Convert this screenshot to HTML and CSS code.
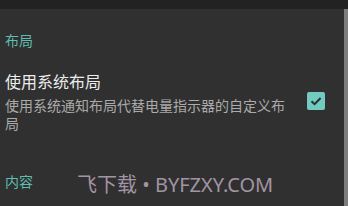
FILE: index.html
```html
<!DOCTYPE html>
<html lang="zh">
<head>
<meta charset="utf-8">
<link rel="stylesheet" href="styles.css">
</head>
<body>
<div class="topbar"></div>
<div class="main">
  <div class="list">
    <div class="category first">布局</div>
    <div class="pref">
      <div class="pref-text">
        <div class="pref-title">使用系统布局</div>
        <div class="pref-summary">使用系统通知布局代替电量指示器的自定义布局</div>
      </div>
      <div class="pref-widget">
        <span class="checkbox">
          <svg viewBox="0 0 18 18" width="18" height="18"><path d="M4.5 9.2 L7.6 12.2 L13.6 6" fill="none" stroke="#263331" stroke-width="2"/></svg>
        </span>
      </div>
    </div>
    <div class="category second">内容</div>
  </div>
  <div class="scrollbar"></div>
</div>
<div class="watermark">飞下载 • BYFZXY.COM</div>
</body>
</html>
```
FILE: styles.css
```css
html, body {
  margin: 0;
  padding: 0;
  background: #303030;
  width: 348px;
  height: 206px;
  overflow: hidden;
  font-family: "Noto Sans CJK SC", "Noto Sans", sans-serif;
}
.topbar {
  height: 9px;
  background: #222222;
}
.main {
  display: flex;
  height: 197px;
}
.list {
  flex: 1;
  padding-left: 5px;
}
.scrollbar {
  width: 4px;
  background: #7d7d7d;
}
.category {
  color: #5fbcae;
  font-size: 14px;
  line-height: 20px;
}
.category.first {
  margin-top: 21px;
}
.category.second {
  margin-top: 39px;
}
.pref {
  display: flex;
  align-items: center;
  margin-top: 20px;
}
.pref-text {
  width: 284px;
}
.pref-title {
  color: #ececec;
  font-size: 16px;
  line-height: 22px;
}
.pref-summary {
  color: #ababab;
  font-size: 14px;
  line-height: 18px;
  margin-top: 4px;
}
.pref-widget {
  flex: 1;
  display: flex;
  justify-content: flex-start;
  padding-left: 18px;
}
.checkbox {
  display: block;
  width: 18px;
  height: 18px;
  border-radius: 2px;
  background: #72cac1;
}
.checkbox svg {
  display: block;
}
.watermark {
  position: absolute;
  left: 77px;
  top: 173px;
  color: #a394a4;
  font-family: "Noto Sans", "Noto Sans CJK SC", sans-serif;
  font-size: 20px;
  line-height: 24px;
  white-space: nowrap;
}
```
